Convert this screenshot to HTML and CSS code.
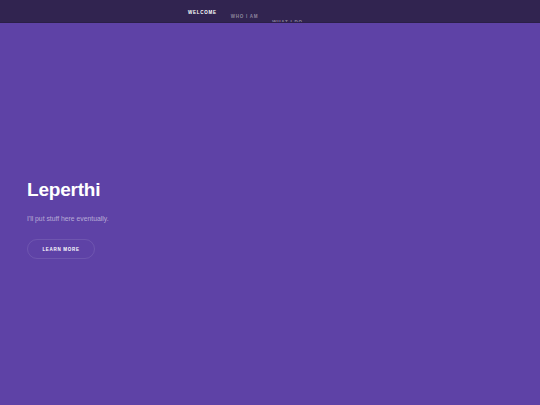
FILE: index.html
```html
<!DOCTYPE html>
<html lang="en">

<head>
	<meta charset="UTF-8">
	<meta name="viewport" content="width=device-width, initial-scale=1.0">
	<title>Leperthi</title>
	<link rel="stylesheet" href="styles.css">
</head>

<body>
	<header id="header">
		<nav class="nav">
			<a href="#intro" class="active">Welcome</a>
			<a href="#one" class="step-2">Who I am</a>
			<a href="#two" class="step-3">What I do</a>
		</nav>
	</header>
	<section id="intro">
		<h1>Leperthi</h1>
		<p>I'll put stuff here eventually.</p>
		<a href="#one" class="button">Learn more</a>
	</section>
</body>

</html>
```

FILE: styles.css
```css
html {
	height: 100%;
}

body {
	margin: 0;
	height: 100%;
	display: flex;
	flex-direction: column;
	background: #5e42a6;
	font-family: 'Liberation Sans', Arial, sans-serif;
	color: #ffffff;
	overflow: hidden;
}

#header {
	height: 22px;
	flex-shrink: 0;
	background: #312450;
	border-bottom: 1px solid #2b1f47;
	overflow: hidden;
}

.nav {
	display: flex;
	align-items: flex-start;
	gap: 14px;
	padding: 10px 0 0 188px;
}

.nav a {
	font-size: 4.5px;
	font-weight: bold;
	letter-spacing: 0.75px;
	text-transform: uppercase;
	text-decoration: none;
	color: rgba(255, 255, 255, 0.45);
	line-height: 6px;
}

.nav a.active {
	color: #ffffff;
}

/* links still sliding in */
.nav a.step-2 {
	transform: translateY(4px);
}

.nav a.step-3 {
	transform: translateY(10px);
}

#intro {
	flex: 1;
	padding: 155px 27px 0 27px;
}

#intro h1 {
	margin: 0;
	font-size: 19px;
	line-height: 24px;
	font-weight: bold;
	letter-spacing: -0.2px;
}

#intro p {
	margin: 12px 0 0 0;
	font-size: 6.8px;
	line-height: 10px;
	color: rgba(255, 255, 255, 0.55);
}

.button {
	display: inline-flex;
	align-items: center;
	justify-content: center;
	margin-top: 15px;
	width: 66px;
	height: 18px;
	border: 1px solid rgba(255, 255, 255, 0.1);
	border-radius: 10px;
	font-size: 4.5px;
	font-weight: bold;
	letter-spacing: 0.7px;
	text-transform: uppercase;
	text-decoration: none;
	color: #ffffff;
}
```
